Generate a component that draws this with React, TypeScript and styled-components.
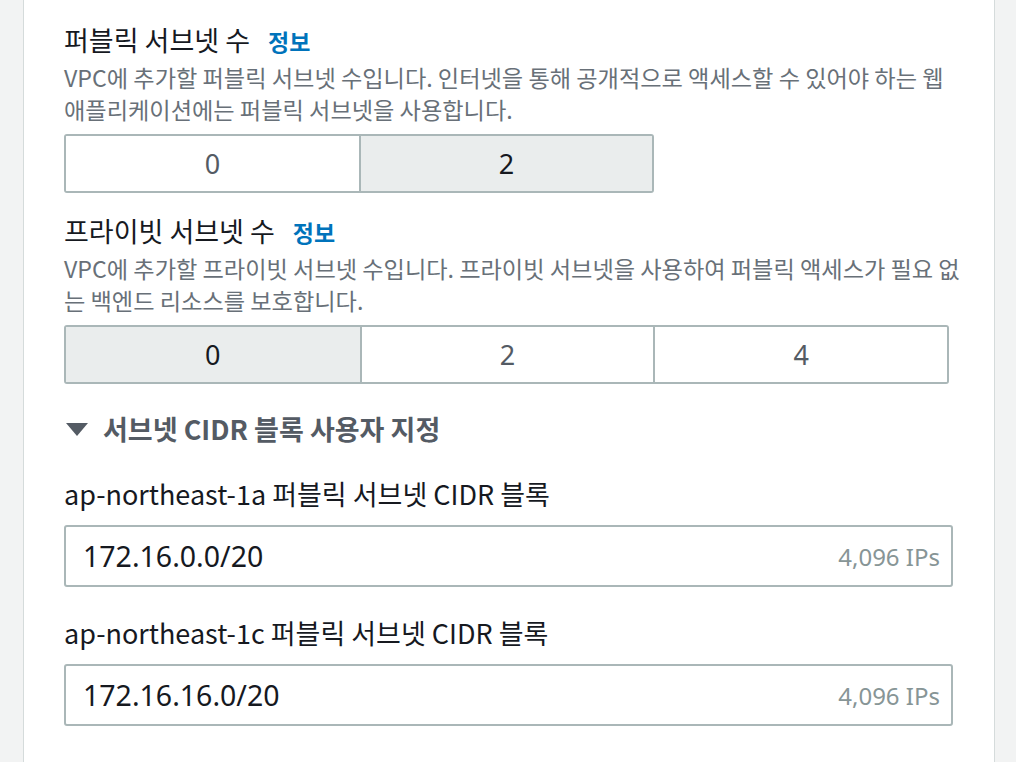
import React from "react";
import styled, { createGlobalStyle } from "styled-components";

const Global = createGlobalStyle`
  html, body { margin: 0; padding: 0; background: #f2f3f3; }
  body { font-family: "Noto Sans CJK KR", "Noto Sans", sans-serif; }
`;

const Page = styled.div`
  display: flex;
  height: 762px;
  overflow: hidden;
`;

const SideGutter = styled.div<{ $w: number }>`
  flex: 0 0 ${(p) => p.$w}px;
  background: #f2f3f3;
`;

const Panel = styled.main`
  flex: 0 0 972px;
  min-width: 0;
  background: #ffffff;
  border-left: 1px solid #d5dbdb;
  border-right: 1px solid #d5dbdb;
  padding: 22px 40px 0 40px;
  box-sizing: border-box;
  display: flex;
  flex-direction: column;
`;

const Field = styled.section<{ $mt: number }>`
  display: flex;
  flex-direction: column;
  margin-top: ${(p) => p.$mt}px;
`;

const LabelRow = styled.div`
  display: flex;
  align-items: baseline;
  gap: 18px;
  font-size: 27px;
  line-height: 36px;
  color: #16191f;
`;

const InfoLink = styled.a`
  color: #0073bb;
  font-weight: 700;
  font-size: 23px;
  text-decoration: none;
`;

const Description = styled.p`
  margin: 2px 0 9px 0;
  font-size: 23.2px;
  line-height: 32px;
  color: #687078;
  white-space: nowrap;
`;

const Segmented = styled.div<{ $count: number }>`
  display: grid;
  grid-template-columns: repeat(${(p) => p.$count}, 1fr);
  width: ${(p) => p.$count * 295}px;
  box-sizing: border-box;
  border: 2px solid #aab7b8;
  border-radius: 3px;
  overflow: hidden;
`;

const Segment = styled.button<{ $selected: boolean }>`
  height: 55px;
  border: none;
  border-left: 2px solid #aab7b8;
  &:first-child { border-left: none; }
  background: ${(p) => (p.$selected ? "#eaeded" : "#ffffff")};
  color: ${(p) => (p.$selected ? "#16191f" : "#545b64")};
  font-family: "Noto Sans", sans-serif;
  font-size: 27px;
  padding: 0;
`;

const Expander = styled.div`
  display: flex;
  align-items: center;
  gap: 15px;
  margin: 27px 0 0 2px;
  font-size: 27px;
  font-weight: 700;
  color: #545b64;
  line-height: 36px;
`;

const Caret = styled.span`
  width: 0;
  height: 0;
  border-left: 11px solid transparent;
  border-right: 11px solid transparent;
  border-top: 13px solid #545b64;
`;

const CidrField = styled.div<{ $mt: number }>`
  display: flex;
  flex-direction: column;
  margin-top: ${(p) => p.$mt}px;
`;

const CidrLabel = styled.div`
  font-size: 27px;
  line-height: 36px;
  color: #16191f;
  margin-bottom: 13px;
`;

const InputBox = styled.div`
  width: 889px;
  height: 62px;
  box-sizing: border-box;
  border: 2px solid #aab7b8;
  border-radius: 3px;
  display: flex;
  align-items: center;
  justify-content: space-between;
  padding: 0 11px 0 17px;
`;

const InputValue = styled.span`
  font-family: "Noto Sans", sans-serif;
  font-size: 28.5px;
  color: #16191f;
`;

const IpCount = styled.span`
  font-family: "Noto Sans", sans-serif;
  font-size: 24px;
  color: #879596;
`;

function SegmentedControl({ options, selected }: { options: string[]; selected: string }) {
  return (
    <Segmented $count={options.length}>
      {options.map((o) => (
        <Segment key={o} $selected={o === selected}>
          {o}
        </Segment>
      ))}
    </Segmented>
  );
}

export default function App() {
  return (
    <>
      <Global />
      <Page>
        <SideGutter $w={23} />
        <Panel>
          <Field $mt={0}>
            <LabelRow>
              퍼블릭 서브넷 수 <InfoLink href="#">정보</InfoLink>
            </LabelRow>
            <Description>
              VPC에 추가할 퍼블릭 서브넷 수입니다. 인터넷을 통해 공개적으로 액세스할 수 있어야 하는 웹
              <br />
              애플리케이션에는 퍼블릭 서브넷을 사용합니다.
            </Description>
            <SegmentedControl options={["0", "2"]} selected="2" />
          </Field>
          <Field $mt={20}>
            <LabelRow>
              프라이빗 서브넷 수 <InfoLink href="#">정보</InfoLink>
            </LabelRow>
            <Description>
              VPC에 추가할 프라이빗 서브넷 수입니다. 프라이빗 서브넷을 사용하여 퍼블릭 액세스가 필요 없<br />는 백엔드 리소스를 보호합니다.
            </Description>
            <SegmentedControl options={["0", "2", "4"]} selected="0" />
          </Field>
          <Expander>
            <Caret />
            서브넷 CIDR 블록 사용자 지정
          </Expander>
          <CidrField $mt={29}>
            <CidrLabel>ap-northeast-1a 퍼블릭 서브넷 CIDR 블록</CidrLabel>
            <InputBox>
              <InputValue>172.16.0.0/20</InputValue>
              <IpCount>4,096 IPs</IpCount>
            </InputBox>
          </CidrField>
          <CidrField $mt={28}>
            <CidrLabel>ap-northeast-1c 퍼블릭 서브넷 CIDR 블록</CidrLabel>
            <InputBox>
              <InputValue>172.16.16.0/20</InputValue>
              <IpCount>4,096 IPs</IpCount>
            </InputBox>
          </CidrField>
        </Panel>
        <SideGutter $w={21} />
      </Page>
    </>
  );
}
